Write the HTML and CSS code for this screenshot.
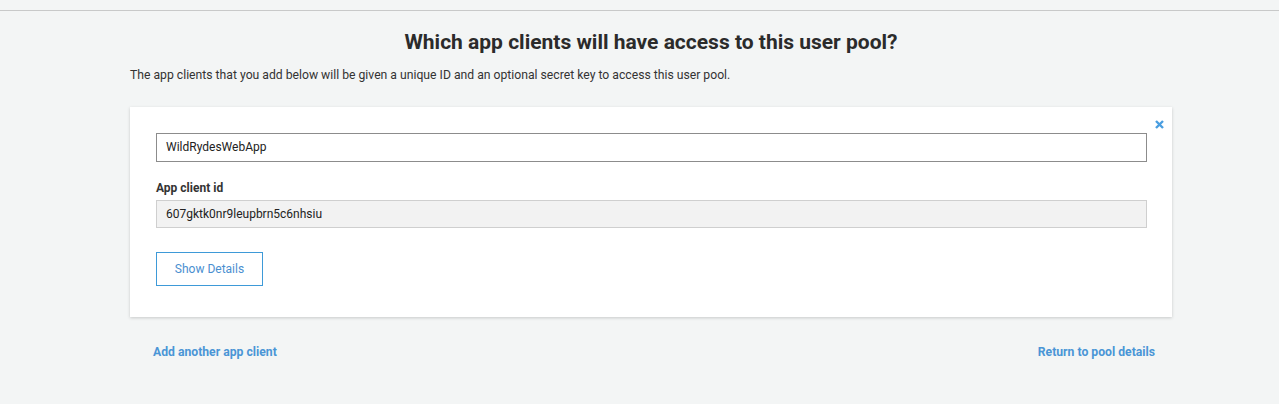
FILE: index.html
```html
<!DOCTYPE html>
<html>
<head>
<meta charset="utf-8">
<link rel="stylesheet" href="styles.css">
</head>
<body>
<div class="topbar"></div>
<main class="page">
  <h1 class="title">Which app clients will have access to this user pool?</h1>
  <p class="intro">The app clients that you add below will be given a unique ID and an optional secret key to access this user pool.</p>
  <section class="card">
    <button class="close" aria-label="Remove">
      <svg width="9" height="9" viewBox="0 0 9 9"><path d="M1 1L8 8M8 1L1 8" stroke="#4a9ee0" stroke-width="2.4" stroke-linecap="butt"/></svg>
    </button>
    <div class="field name">WildRydesWebApp</div>
    <div class="label">App client id</div>
    <div class="field readonly">607gktk0nr9leupbrn5c6nhsiu</div>
    <button class="details">Show Details</button>
  </section>
  <div class="actions">
    <a class="link">Add another app client</a>
    <a class="link">Return to pool details</a>
  </div>
</main>
</body>
</html>
```
FILE: styles.css
```css
html, body {
  margin: 0;
  padding: 0;
  background: #f3f5f5;
  font-family: Roboto, "Liberation Sans", sans-serif;
  color: #333;
}
.topbar {
  height: 10px;
  border-bottom: 1px solid #c8c9c9;
}
.page {
  width: 1042px;
  margin: 0 0 0 130px;
}
.title {
  margin: 19px 0 0 0;
  text-align: center;
  font-size: 21px;
  font-weight: 700;
  line-height: 24px;
  color: #2b2b2b;
}
.intro {
  margin: 14px 0 0 0;
  font-size: 12.2px;
  line-height: 14px;
  color: #333;
}
.card {
  position: relative;
  margin-top: 25px;
  background: #fff;
  box-shadow: 0 1px 3px rgba(0,0,0,0.18);
  padding: 26px 25px 31px 26px;
  height: 210px;
  box-sizing: border-box;
  display: flex;
  flex-direction: column;
  align-items: flex-start;
}
.close {
  position: absolute;
  top: 13px;
  right: 8px;
  border: 0;
  padding: 0;
  background: none;
  width: 9px;
  height: 9px;
  line-height: 0;
}
.field {
  box-sizing: border-box;
  width: 100%;
  height: 29px;
  padding: 0 9px;
  font-size: 12px;
  line-height: 27px;
  color: #222;
}
.field.name {
  border: 1px solid #8c8c8c;
}
.field.readonly {
  background: #f2f2f2;
  border: 1px solid #cfcfcf;
  height: 28px;
  line-height: 26px;
}
.label {
  margin-top: 19px;
  margin-bottom: 5px;
  font-size: 12px;
  font-weight: 700;
  line-height: 14px;
  color: #333;
}
.details {
  margin-top: 24px;
  width: 107px;
  height: 34px;
  border: 1px solid #3e9ad8;
  background: #fff;
  color: #4a8fd0;
  font-family: Roboto, "Liberation Sans", sans-serif;
  font-size: 12px;
  padding: 0;
}
.actions {
  display: flex;
  justify-content: space-between;
  padding: 0 17px 0 23px;
  margin-top: 28px;
}
.link {
  font-size: 12.2px;
  font-weight: 700;
  line-height: 14px;
  color: #4a95d6;
}
```
